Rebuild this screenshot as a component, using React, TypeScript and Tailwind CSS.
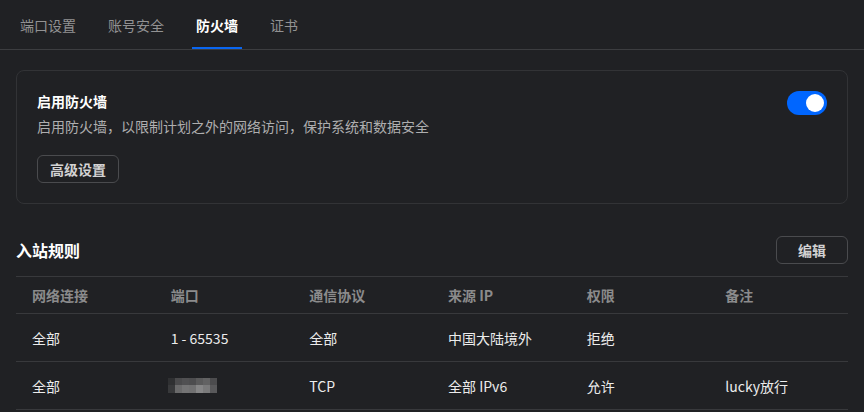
import { useState } from "react";

const tabs = ["端口设置", "账号安全", "防火墙", "证书"];

const columns = ["网络连接", "端口", "通信协议", "来源 IP", "权限", "备注"];

interface Rule {
  network: string;
  port: string | null;
  protocol: string;
  source: string;
  access: string;
  note: string;
}

const rules: Rule[] = [
  { network: "全部", port: "1 - 65535", protocol: "全部", source: "中国大陆境外", access: "拒绝", note: "" },
  { network: "全部", port: null, protocol: "TCP", source: "全部 IPv6", access: "允许", note: "lucky放行" },
];

// pixelated blur over the hidden port
const mosaicTop = ["#2f3032", "#4a4a4c", "#505052", "#4d4d4f", "#5a5a5b", "#626263", "#4c4c4e"];
const mosaicBottom = ["#38393b", "#6a6a6b", "#747475", "#717172", "#868687", "#7a7a7b", "#59595b"];

const Mosaic = () => (
  <div className="flex flex-col -ml-[3px]">
    <div className="flex">
      {mosaicTop.map((c, i) => (
        <div key={i} className="w-[7px] h-[7px]" style={{ backgroundColor: c }} />
      ))}
    </div>
    <div className="flex">
      {mosaicBottom.map((c, i) => (
        <div key={i} className="w-[7px] h-[8px]" style={{ backgroundColor: c }} />
      ))}
    </div>
  </div>
);

export default function App() {
  const [active, setActive] = useState(2);
  const [enabled, setEnabled] = useState(true);

  return (
    <div
      className="w-[864px] h-[412px] overflow-hidden bg-[#202124] text-[14px]"
      style={{ fontFamily: '"Noto Sans CJK SC", "Noto Sans", sans-serif' }}
    >
      <nav className="flex gap-6 pl-4 border-b border-[#3c3d40]">
        {tabs.map((t, i) => (
          <button
            key={t}
            onClick={() => setActive(i)}
            className={`relative h-[49px] px-1 leading-5 ${
              i === active ? "text-white font-bold" : "text-[#929293]"
            }`}
          >
            {t}
            {i === active ? (
              <span className="absolute left-0 right-0 bottom-0 h-[2px] bg-[#0a66f0]" />
            ) : null}
          </button>
        ))}
      </nav>

      <div className="px-4 pt-5">
        <div className="rounded-lg border border-[#323336] p-5 flex justify-between">
          <div>
            <div className="leading-5 font-bold text-white">启用防火墙</div>
            <div className="mt-[5px] leading-5 text-[#aeaeaf]">
              启用防火墙，以限制计划之外的网络访问，保护系统和数据安全
            </div>
            <button className="mt-[19px] h-7 px-3 rounded-md border border-[#4a4b4e] font-bold text-[#d2d2d3] leading-5">
              高级设置
            </button>
          </div>
          <button
            onClick={() => setEnabled(!enabled)}
            className={`w-10 h-6 rounded-full flex items-center px-[3px] ${
              enabled ? "bg-[#0066ff] justify-end" : "bg-[#4a4b4e] justify-start"
            }`}
          >
            <span className="w-[18px] h-[18px] rounded-full bg-white" />
          </button>
        </div>

        <div className="mt-8 flex items-center justify-between">
          <h2 className="text-[16px] font-bold text-white leading-6">入站规则</h2>
          <button className="h-7 w-[72px] rounded-md border border-[#4a4b4e] font-bold text-[#d2d2d3] leading-5">
            编辑
          </button>
        </div>

        <div className="mt-3">
          <div className="grid grid-cols-6 h-[38px] items-center border-t border-b border-[#38393c]">
            {columns.map((c) => (
              <div key={c} className="px-4 font-bold text-[#8b8b8c] leading-5">
                {c}
              </div>
            ))}
          </div>
          {rules.map((r, i) => (
            <div
              key={i}
              className="grid grid-cols-6 h-12 items-center border-b border-[#38393c] text-[#ececec] leading-5"
            >
              <div className="px-4">{r.network}</div>
              <div className="px-4">{r.port ?? <Mosaic />}</div>
              <div className="px-4">{r.protocol}</div>
              <div className="px-4">{r.source}</div>
              <div className="px-4">{r.access}</div>
              <div className="px-4">{r.note}</div>
            </div>
          ))}
        </div>
      </div>
    </div>
  );
}
